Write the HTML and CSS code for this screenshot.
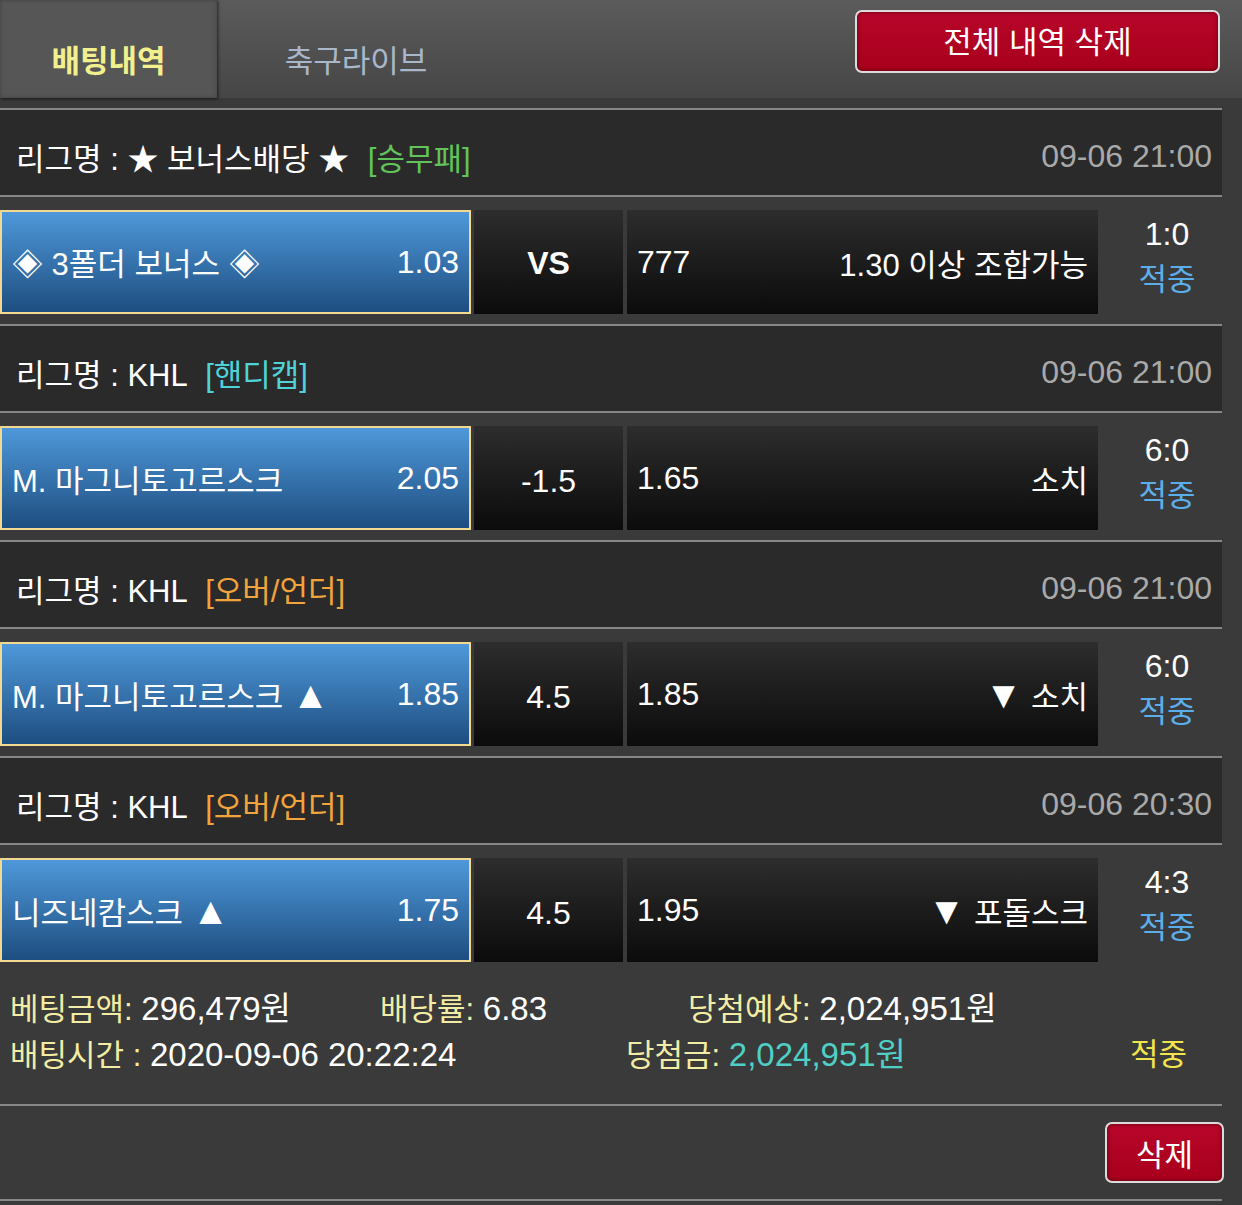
FILE: index.html
```html
<!DOCTYPE html>
<html lang="ko">
<head>
    <meta charset="UTF-8">
    <meta name="viewport" content="width=device-width, initial-scale=1.0">
    <title>배팅내역</title>
    <link rel="stylesheet" href="styles.css">
</head>
<body>
    <header class="top">
        <nav class="tabs">
            <a href="#" class="tab active">배팅내역</a>
            <a href="#" class="tab tab-live">축구라이브</a>
        </nav>
        <button class="btn-red btn-all">전체 내역 삭제</button>
    </header>

    <div class="bet-list">
        <!-- 1 -->
        <div class="league">
            <div class="league-name">리그명 : ★ 보너스배당 ★ <span class="tag tag-win">[승무패]</span></div>
            <div class="league-date">09-06 21:00</div>
        </div>
        <div class="match">
            <div class="pick home">
                <span class="team">◈ 3폴더 보너스 ◈</span>
                <span class="odds">1.03</span>
            </div>
            <div class="cell mid vs">VS</div>
            <div class="cell away">
                <span class="odds">777</span>
                <span class="team">1.30 이상 조합가능</span>
            </div>
            <div class="result">
                <div class="score">1:0</div>
                <div class="hit">적중</div>
            </div>
        </div>

        <!-- 2 -->
        <div class="league">
            <div class="league-name">리그명 : KHL <span class="tag tag-handi">[핸디캡]</span></div>
            <div class="league-date">09-06 21:00</div>
        </div>
        <div class="match">
            <div class="pick home">
                <span class="team">M. 마그니토고르스크</span>
                <span class="odds">2.05</span>
            </div>
            <div class="cell mid">-1.5</div>
            <div class="cell away">
                <span class="odds">1.65</span>
                <span class="team">소치</span>
            </div>
            <div class="result">
                <div class="score">6:0</div>
                <div class="hit">적중</div>
            </div>
        </div>

        <!-- 3 -->
        <div class="league">
            <div class="league-name">리그명 : KHL <span class="tag tag-ou">[오버/언더]</span></div>
            <div class="league-date">09-06 21:00</div>
        </div>
        <div class="match">
            <div class="pick home">
                <span class="team">M. 마그니토고르스크 <span class="arrow">▲</span></span>
                <span class="odds">1.85</span>
            </div>
            <div class="cell mid">4.5</div>
            <div class="cell away">
                <span class="odds">1.85</span>
                <span class="team"><span class="arrow">▼</span> 소치</span>
            </div>
            <div class="result">
                <div class="score">6:0</div>
                <div class="hit">적중</div>
            </div>
        </div>

        <!-- 4 -->
        <div class="league">
            <div class="league-name">리그명 : KHL <span class="tag tag-ou">[오버/언더]</span></div>
            <div class="league-date">09-06 20:30</div>
        </div>
        <div class="match">
            <div class="pick home">
                <span class="team">니즈네캄스크 <span class="arrow">▲</span></span>
                <span class="odds">1.75</span>
            </div>
            <div class="cell mid">4.5</div>
            <div class="cell away">
                <span class="odds">1.95</span>
                <span class="team"><span class="arrow">▼</span> 포돌스크</span>
            </div>
            <div class="result">
                <div class="score">4:3</div>
                <div class="hit">적중</div>
            </div>
        </div>

        <div class="summary">
            <div class="sum-row">
                <div class="sum-item w-amount"><span class="label">베팅금액:</span> <span class="val">296,479원</span></div>
                <div class="sum-item w-rate"><span class="label">배당률:</span> <span class="val">6.83</span></div>
                <div class="sum-item"><span class="label">당첨예상:</span> <span class="val">2,024,951원</span></div>
            </div>
            <div class="sum-row">
                <div class="sum-item w-time"><span class="label">배팅시간 :</span> <span class="val">2020-09-06 20:22:24</span></div>
                <div class="sum-item w-win"><span class="label">당첨금:</span> <span class="val val-win">2,024,951원</span></div>
                <div class="sum-item status">적중</div>
            </div>
        </div>

        <div class="actions">
            <button class="btn-red btn-del">삭제</button>
        </div>
    </div>
</body>
</html>
```

FILE: styles.css
```css
:root {
    --bg-color: #3a3a3a;
    --league-bg: #2a2a2a;
    --line-color: #878787;
    --label-color: #f3eca4;
    --red: #b00320;
}

* {
    box-sizing: border-box;
}

body {
    margin: 0;
    padding: 0;
    background-color: var(--bg-color);
    color: #fff;
    font-family: "Liberation Sans", "Noto Sans CJK KR", sans-serif;
    font-size: 31px;
    overflow: hidden;
}

/* Header */
.top {
    height: 98px;
    display: flex;
    justify-content: space-between;
    align-items: flex-start;
    background: linear-gradient(#5b5b5b, #464646);
    margin-bottom: 10px;
}

.tabs {
    display: flex;
    height: 100%;
}

.tab {
    display: flex;
    align-items: flex-end;
    justify-content: center;
    padding-bottom: 17px;
    text-decoration: none;
    font-size: 31px;
    color: #a9b7ca;
}

.tab.active {
    width: 217px;
    background-color: #565656;
    color: #f2f08e;
    font-weight: bold;
    box-shadow: 1px 1px 3px rgba(0, 0, 0, 0.6), inset 0 0 4px rgba(0, 0, 0, 0.25);
}

.tab-live {
    width: 278px;
}

.btn-red {
    font-family: inherit;
    color: #fff;
    background: linear-gradient(#b8062a, #a8001c);
    border: 2px solid #dcdcdc;
    border-radius: 7px;
    box-shadow: inset 0 0 4px rgba(0, 0, 0, 0.5);
    cursor: pointer;
    padding: 0;
}

.btn-all {
    width: 365px;
    height: 63px;
    margin: 10px 22px 0 0;
    font-size: 31px;
    padding-bottom: 4px;
}

/* Bet list */
.bet-list {
    width: 1222px;
}

.league {
    height: 89px;
    display: flex;
    justify-content: space-between;
    align-items: center;
    padding: 7px 10px 0 16px;
    background-color: var(--league-bg);
    border-top: 2px solid var(--line-color);
    border-bottom: 2px solid var(--line-color);
}

.tag {
    margin-left: 10px;
}

.tag-win {
    color: #62c35a;
}

.tag-handi {
    color: #4fd3d8;
}

.tag-ou {
    color: #f2a33c;
}

.league-date {
    font-size: 32px;
    color: #a9a9a9;
}

.match {
    height: 127px;
    display: flex;
    padding: 13px 0 10px;
}

.pick,
.cell {
    height: 104px;
    display: flex;
    align-items: center;
    justify-content: space-between;
}

.pick {
    width: 471px;
    padding: 0 10px 0 10px;
    background: linear-gradient(#4e98da, #1e4e80);
    border: 2px solid #f2d890;
}

.cell {
    background: linear-gradient(#2d2d2d, #0b0b0b);
}

.mid {
    width: 149px;
    margin-left: 3px;
    justify-content: center;
    font-size: 32px;
    padding-top: 6px;
}

.vs {
    font-weight: bold;
    padding-top: 2px;
}

.away {
    width: 471px;
    margin-left: 4px;
    padding: 0 10px;
}

.team {
    font-size: 31px;
}

.arrow {
    font-size: 38px;
    line-height: 1;
}

.odds {
    font-size: 32px;
}

.result {
    flex: 1;
    display: flex;
    flex-direction: column;
    align-items: center;
    padding: 2px 0 0 14px;
}

.score {
    font-size: 32px;
    line-height: 44px;
}

.hit {
    font-size: 31px;
    line-height: 48px;
    color: #5caee9;
}

/* Summary */
.summary {
    padding: 14px 0 26px 10px;
    border-bottom: 2px solid var(--line-color);
}

.sum-row {
    display: flex;
    line-height: 45px;
}

.label {
    font-size: 31px;
    color: var(--label-color);
}

.val {
    font-size: 33px;
}

.val-win {
    color: #4fcfc6;
}

.w-amount {
    width: 370px;
}

.w-rate {
    width: 308px;
}

.w-time {
    width: 616px;
}

.w-win {
    width: 504px;
}

.status {
    font-size: 31px;
    color: #f2e44c;
}

.actions {
    display: flex;
    justify-content: flex-end;
    padding: 16px 0 16px;
    border-bottom: 2px solid var(--line-color);
}

.btn-del {
    width: 119px;
    height: 61px;
    font-size: 31px;
    margin-right: -2px;
}
```
